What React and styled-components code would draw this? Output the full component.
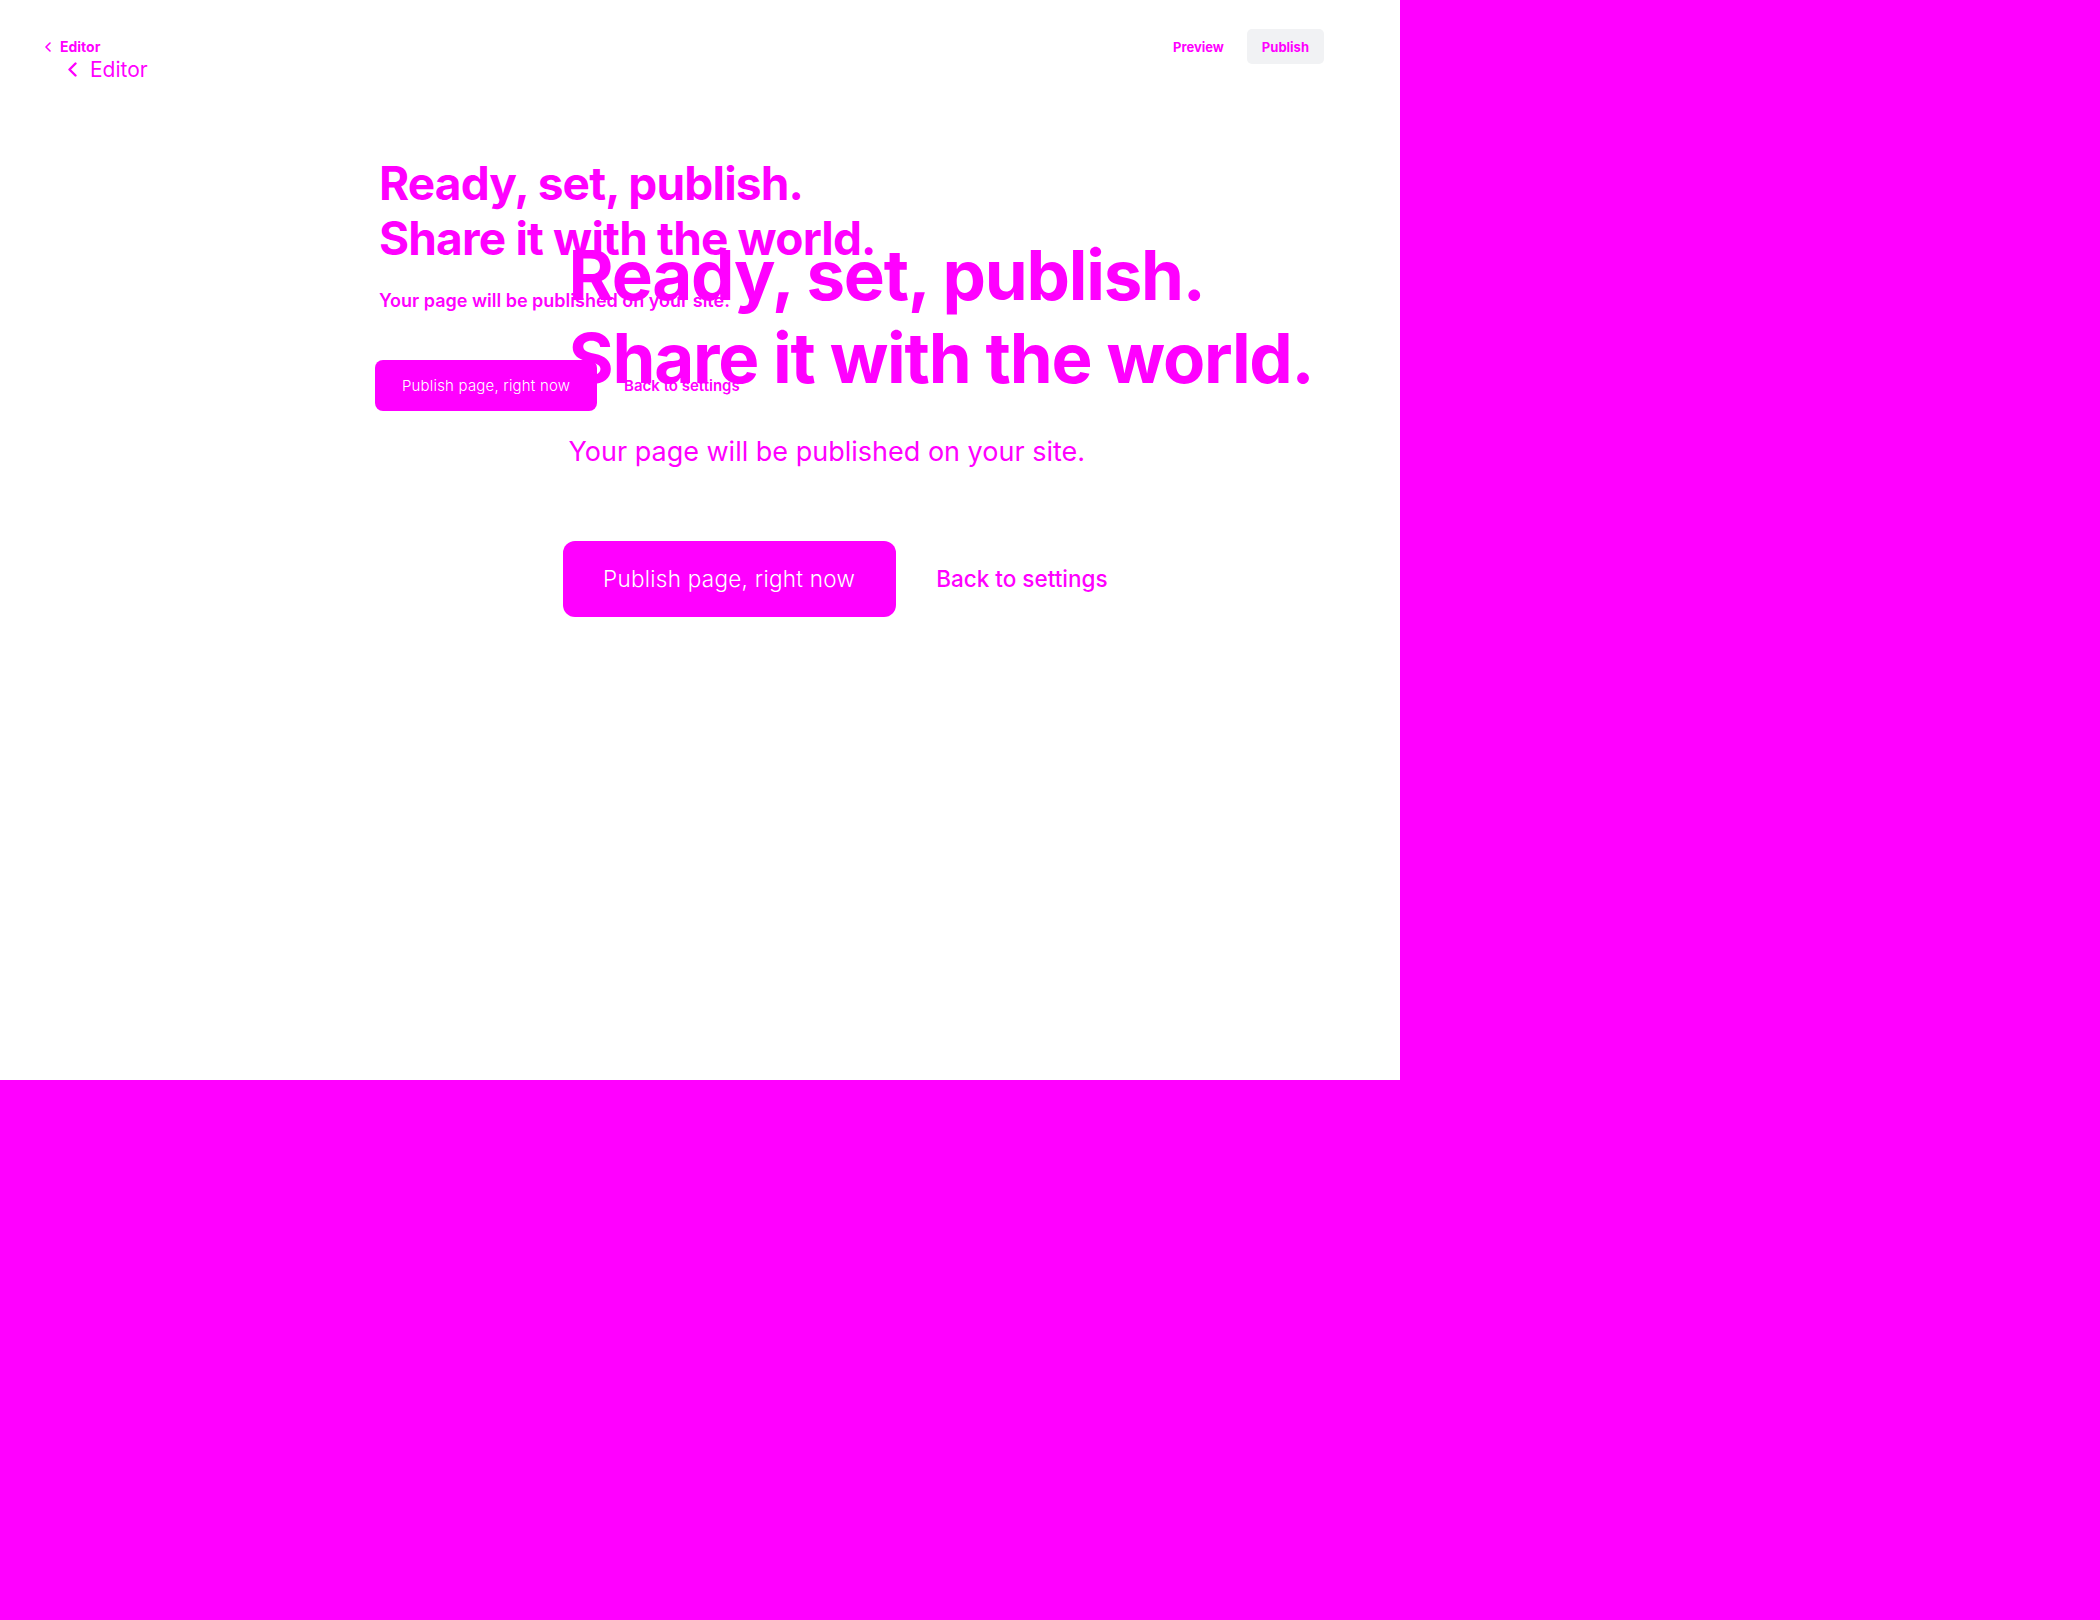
import React from 'react';
import styled, { createGlobalStyle } from 'styled-components';

const MAGENTA = '#ff00ff';

// every size is given at 1x and multiplied by the layer's scale
const u = (v) => ({ $s }) => `${v * $s}px`;

const GlobalStyle = createGlobalStyle`
    html, body {
        margin: 0;
        background: ${MAGENTA};
    }

    body {
        font-family: Inter, "Noto Sans", sans-serif;
    }
`;

const Canvas = styled.div`
    position: relative;
    width: 1400px;
    height: 1080px;
    background: #fff;
    overflow: hidden;
`;

const Overlay = styled.div`
    position: absolute;
    top: 0;
    left: 0;
`;

const PageWrap = styled.div`
    width: ${u(1400)};
    color: ${MAGENTA};
`;

const TopBar = styled.header`
    display: flex;
    align-items: center;
    justify-content: space-between;
    padding: ${u(29)} ${u(76)} 0 ${u(45)};
`;

const BackLink = styled.a`
    display: flex;
    align-items: center;
    gap: ${u(9)};
    font-size: ${u(14)};
    font-weight: ${({ $w }) => $w};
    line-height: 1;
    color: ${MAGENTA};
    text-decoration: none;
`;

const NavActions = styled.nav`
    display: flex;
    align-items: center;
    gap: ${u(8)};
`;

const NavButton = styled.button`
    height: ${u(35)};
    padding: 0 ${u(15)};
    border: none;
    border-radius: ${u(5)};
    background: ${({ $filled }) => ($filled ? '#f1f2f4' : 'transparent')};
    color: ${MAGENTA};
    font-family: inherit;
    font-size: ${u(13)};
    font-weight: 700;
`;

const Content = styled.main`
    margin-top: ${u(92)};
    padding-left: ${u(379)};
`;

const Heading = styled.h1`
    margin: 0;
    font-size: ${u(46)};
    font-weight: 700;
    line-height: 1.2;
    letter-spacing: -0.018em;
`;

const Lead = styled.p`
    margin: ${u(23)} 0 0;
    font-size: ${u(18)};
    font-weight: ${({ $w }) => $w};
    line-height: ${u(24)};
`;

const Actions = styled.div`
    display: flex;
    align-items: center;
    gap: ${u(27)};
    margin: ${u(47)} 0 0 ${u(-4)};
`;

const PublishButton = styled.button`
    height: ${u(51)};
    padding: 0 ${u(27)};
    border: none;
    border-radius: ${u(8)};
    background: ${MAGENTA};
    color: #fff;
    font-family: inherit;
    font-size: ${u(15)};
    font-weight: 300;
    letter-spacing: 0.012em;
`;

const SettingsLink = styled.a`
    font-size: ${u(15)};
    font-weight: ${({ $w }) => $w};
    color: ${MAGENTA};
    text-decoration: none;
`;

const Chevron = ({ s }) => (
    <svg width={6 * s} height={10 * s} viewBox="0 0 6 10" fill="none">
        <polyline
            points="5,1 1,5 5,9"
            stroke={MAGENTA}
            strokeWidth="1.6"
            strokeLinecap="round"
            strokeLinejoin="round"
        />
    </svg>
);

const variants = {
    base: { s: 1, editor: 700, lead: 600, back: 600 },
    zoomed: { s: 1.5, editor: 400, lead: 400, back: 500 },
};

const PublishPage = ({ variant }) => {
    const { s, editor, lead, back } = variants[variant];

    return (
        <PageWrap $s={s}>
            <TopBar $s={s}>
                <BackLink $s={s} $w={editor} href="#">
                    <Chevron s={s} />
                    Editor
                </BackLink>

                <NavActions $s={s}>
                    <NavButton $s={s}>Preview</NavButton>
                    <NavButton $s={s} $filled>Publish</NavButton>
                </NavActions>
            </TopBar>

            <Content $s={s}>
                <Heading $s={s}>
                    Ready, set, publish.
                    <br />
                    Share it with the world.
                </Heading>

                <Lead $s={s} $w={lead}>Your page will be published on your site.</Lead>

                <Actions $s={s}>
                    <PublishButton $s={s}>Publish page, right now</PublishButton>
                    <SettingsLink $s={s} $w={back} href="#">Back to settings</SettingsLink>
                </Actions>
            </Content>
        </PageWrap>
    );
};

const App = () => (
    <>
        <GlobalStyle />
        <Canvas>
            <PublishPage variant="base" />
            <Overlay>
                <PublishPage variant="zoomed" />
            </Overlay>
        </Canvas>
    </>
);

export default App;
